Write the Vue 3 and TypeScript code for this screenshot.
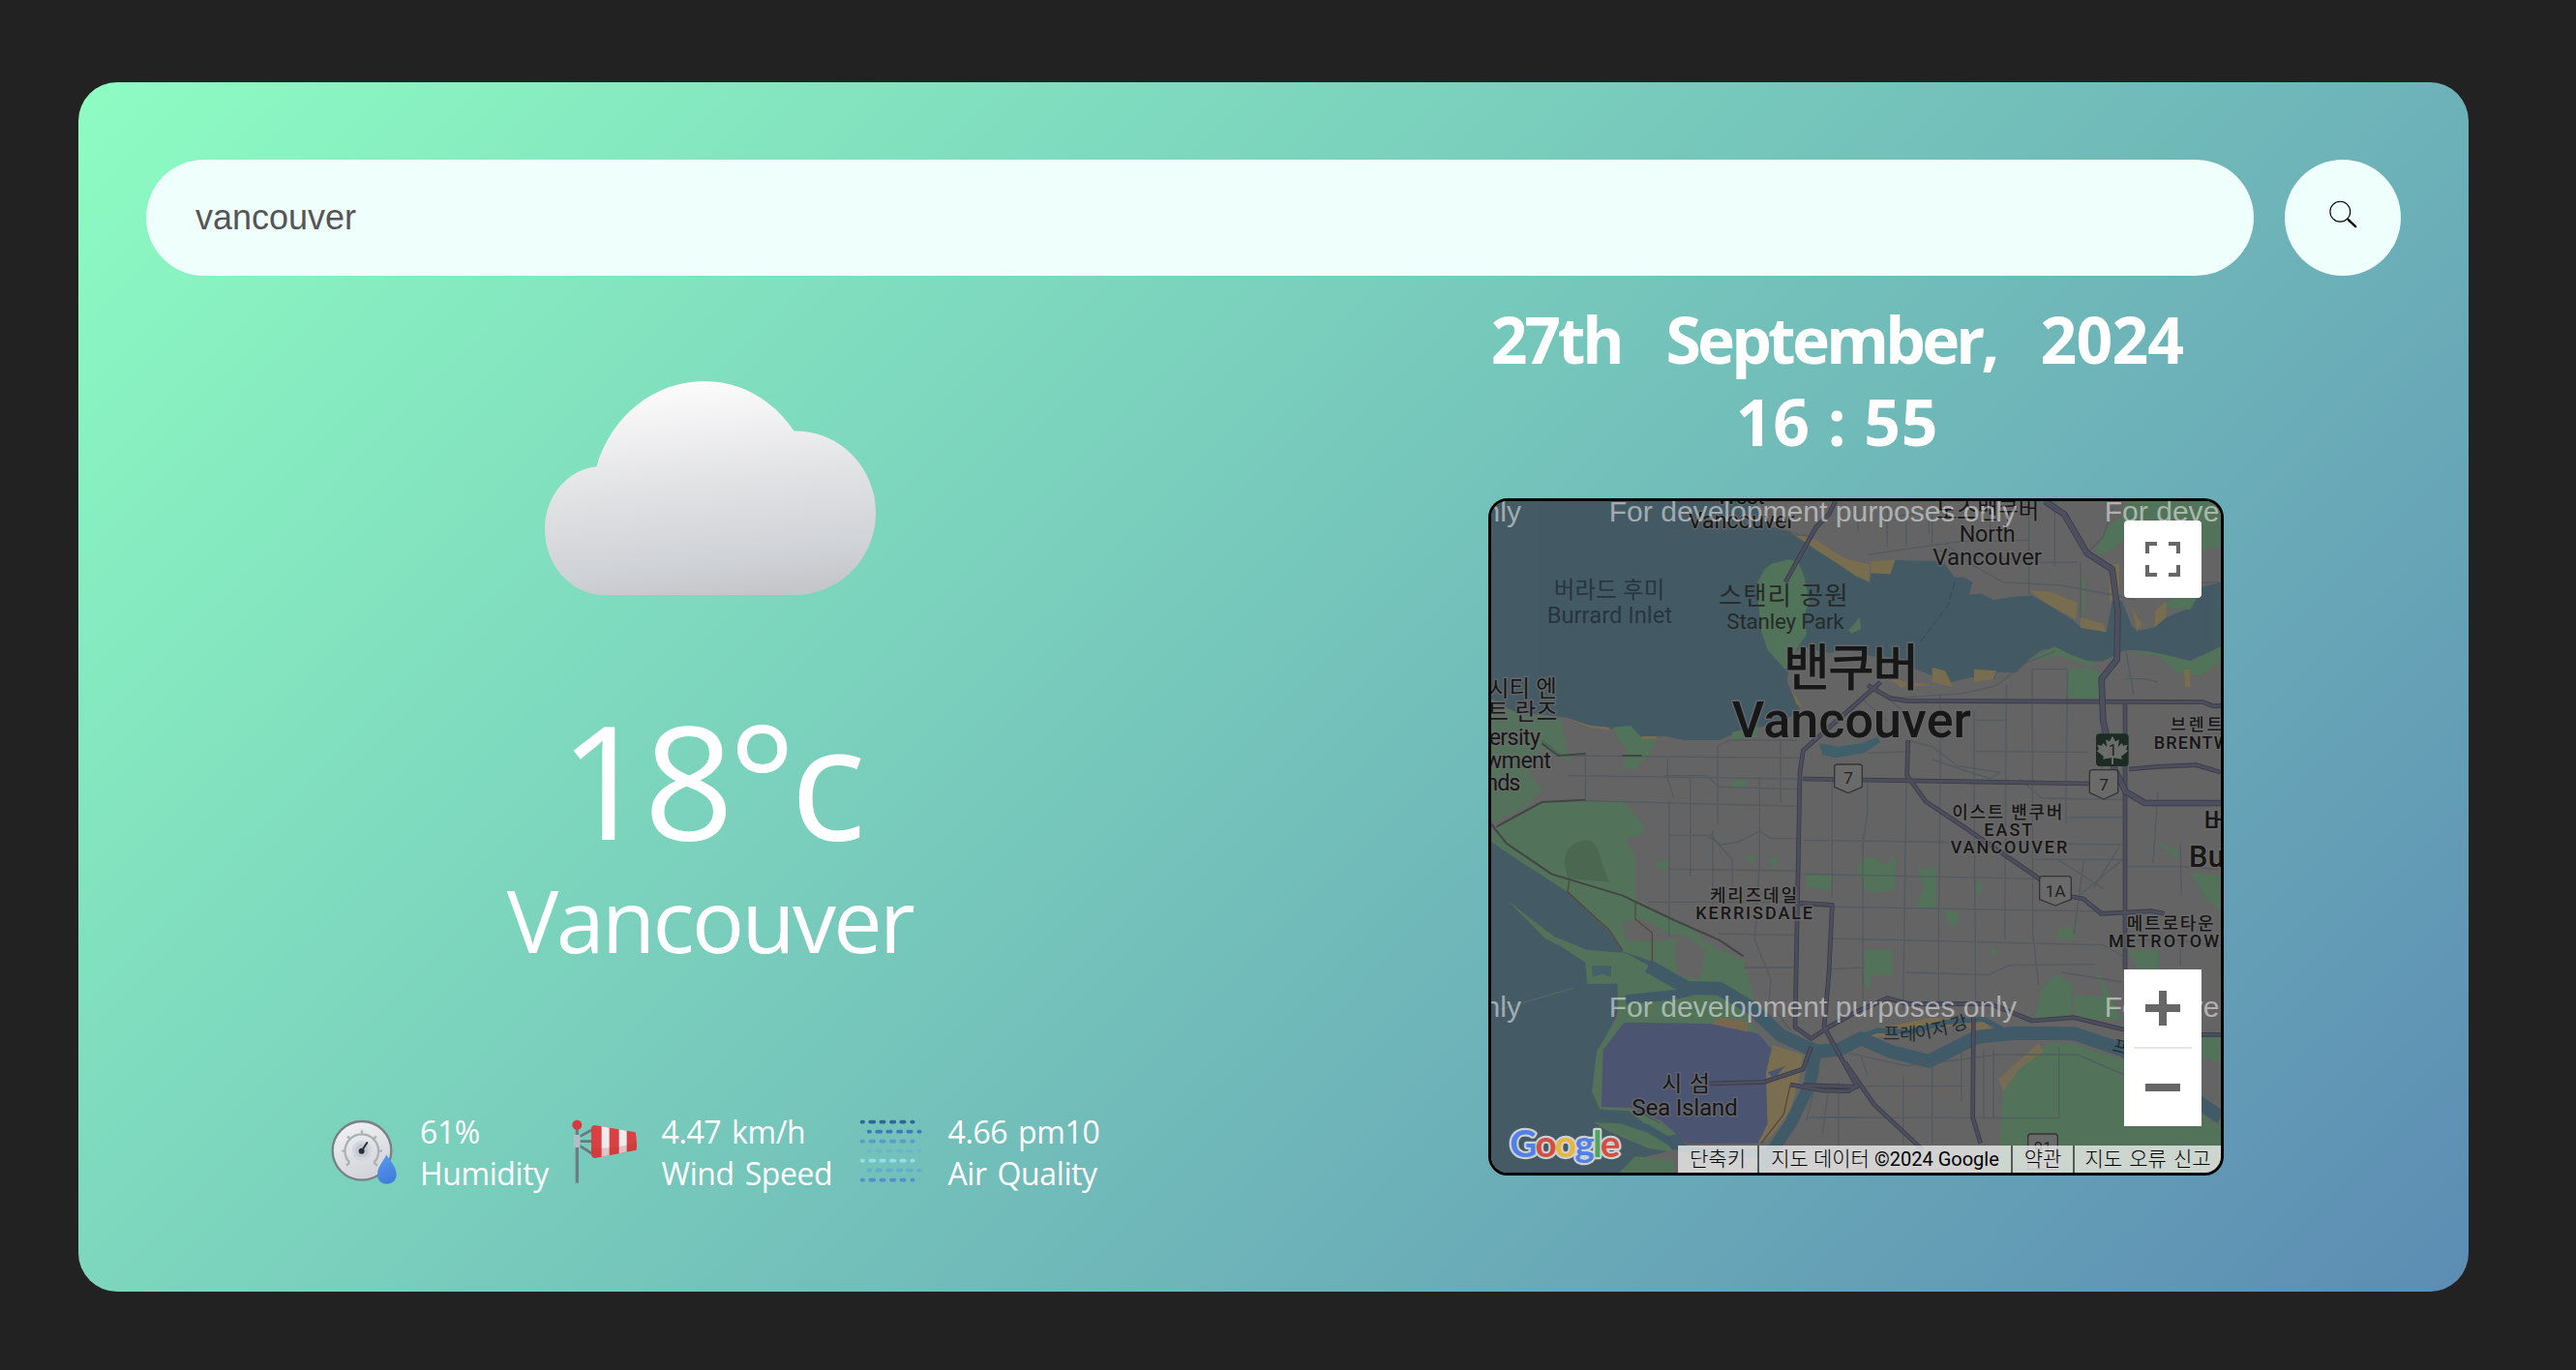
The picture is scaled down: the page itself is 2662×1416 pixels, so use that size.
<script setup lang="ts">
import { ref } from 'vue'

interface Label {
  t: string
  x: number
  y: number
  s: number
  w: number
  c?: string
  b?: number
  a?: 'start' | 'middle' | 'end'
}

const query = ref('vancouver')
const city = ref('Vancouver')
const temperature = ref(18)

// Place names. x / y are map units, s the font size, w the drawn width.
const labels: Label[] = [
  { t: 'West', x: 806, y: 47, s: 70, w: 150 },
  { t: 'Vancouver', x: 808, y: 122, s: 70, w: 330 },
  { t: '노스밴쿠버', x: 1572, y: 92, s: 70, w: 320 },
  { t: 'North', x: 1571, y: 166, s: 70, w: 174 },
  { t: 'Vancouver', x: 1571, y: 238, s: 72, w: 338 },
  { t: '버라드 후미', x: 399, y: 338, s: 70, w: 344, c: '#26353f' },
  { t: 'Burrard Inlet', x: 400, y: 418, s: 71, w: 388, c: '#26353f' },
  { t: '스탠리 공원', x: 938, y: 360, s: 80, w: 402, c: '#262b28' },
  { t: 'Stanley Park', x: 945, y: 434, s: 67, w: 364, c: '#262b28' },
  { t: '밴쿠버', x: 1149, y: 613, s: 156, w: 420, b: 500 },
  { t: 'Vancouver', x: 1150, y: 770, s: 156, w: 742, b: 500 },
  { t: '시티 엔', x: 236, y: 646, s: 70, w: 212, a: 'end' },
  { t: '트 란즈', x: 238, y: 718, s: 70, w: 216, a: 'end' },
  { t: 'ersity', x: 186, y: 794, s: 70, w: 160, a: 'end' },
  { t: 'wment', x: 219, y: 866, s: 70, w: 205, a: 'end' },
  { t: 'nds', x: 124, y: 937, s: 70, w: 108, a: 'end' },
  { t: '브렌트', x: 2219, y: 751, s: 52, w: 160, b: 500 },
  { t: 'BRENTW', x: 2204, y: 807, s: 54, w: 234, b: 500 },
  { t: '이스트 밴쿠버', x: 1633, y: 1023, s: 54, w: 342, b: 500 },
  { t: 'EAST', x: 1636, y: 1077, s: 54, w: 150, b: 500 },
  { t: 'VANCOUVER', x: 1638, y: 1131, s: 54, w: 362, b: 500 },
  { t: '케리즈데일', x: 846, y: 1280, s: 54, w: 270, b: 500 },
  { t: 'KERRISDALE', x: 848, y: 1335, s: 54, w: 362, b: 500 },
  { t: '메트로타운', x: 2138, y: 1368, s: 54, w: 270, b: 500 },
  { t: 'METROTOW', x: 2118, y: 1422, s: 54, w: 342, b: 500 },
  { t: '버', x: 2242, y: 1064, s: 84, w: 78, b: 500, a: 'start' },
  { t: 'Bur', x: 2268, y: 1174, s: 92, w: 144, b: 500 },
  { t: '시 섬', x: 636, y: 1870, s: 69, w: 150 },
  { t: 'Sea Island', x: 633, y: 1944, s: 73, w: 328 },
]

// Neighbourhood street grid.
const streets = [
  'M325 820V962', 'M580 835V900L600 960', 'M585 970V1390', 'M650 895V1200', 'M735 1040V800L770 780H980',
  'M865 895V1160L850 1400', 'M930 780V975', 'M1090 910V1270', 'M720 1060V1340', 'M190 780L250 828L1000 835',
  'M270 890L980 900', 'M320 968L985 985', 'M570 890H700L740 925L985 932', 'M585 1075H700L745 1105L800 1095L865 1062L900 1085H985',
  'M585 1180L985 1185', 'M520 1282H985', 'M735 1380L985 1385', 'M815 1485H985', 'M710 1070L780 1150V1270',
  'M850 1400L900 1520L895 1590L960 1680', 'M1185 1075V1600', 'M1185 1110L1200 1000L1200 900', 'M1320 905L1310 1620', 'M1425 640V890L1420 1400V1600',
  'M1530 690V1000L1535 1600', 'M1630 610L1625 1400', 'M1710 560H1818', 'M1710 560L1712 1380L1730 1540', 'M1820 560L1815 900V1040',
  'M1870 1150L1840 1380', 'M1925 680V910', 'M2170 1100L2172 1260', 'M2100 940L2085 1160', 'M1000 1090L1995 1104',
  'M1000 1195L1720 1210', 'M990 1295L1990 1312', 'M1090 1395L1930 1415L2000 1455', 'M1085 1490L1185 1485', 'M1320 1500L1575 1508L1640 1478L1900 1475',
  'M1200 820L1330 815M1530 718H1630M1530 815L1880 817', 'M1320 780L1400 800L1480 860L1610 880L1580 900L1400 840', 'M1670 900L1740 960L1990 965', 'M1820 1020H1990M1720 1150H1990L1860 1260',
  'M1980 1110L1900 1240M1790 1150L1930 1240M2000 1172H2170L2290 1180', 'M1200 205L1300 190L1480 165L1700 160', 'M1270 90L1400 70V190L1550 210L1750 230L1850 228', 'M1170 130V60M1260 180V60M1320 180V60M1390 60V140',
  'M1440 170L1530 240L1620 290L1800 300L1960 330L2030 345', 'M1700 40V330M1780 40V240M1860 230V400M1580 60V170', 'M1880 200L1930 150L1960 60M2000 300L2290 290', 'M1280 650L1500 635L1600 610L1690 540L1780 505',
  'M2000 500L2025 640M2000 590H2060L2100 600', 'M1180 1760L1200 1820M1140 1750L1320 1790L1490 1770L1600 1755H1850L2000 1820', 'M1400 1790V2030M1310 1820V2030M1560 1740V1950M1590 1740V1950M1490 1740V1900', 'M1190 1853H1500M1050 1860H1120M1050 1950L1795 1952M1793 1730V1950',
  'M1050 1800L1010 1960M1110 1840V2040M1080 1850L1060 2000M1020 1950H1170', 'M1180 650L1260 720M1230 620L1320 700M1150 690L1240 600', 'M590 130L1010 145', 'M1800 1500L1990 1530M2000 1400H2170L2290 1420M2170 1480V1400',
]

// Arterial roads and highways.
const arterials = [
  'M1100 39L1080 80L1040 120L945 290', 'M1240 600L1000 812L990 880L975 1670L1025 1705L1075 1672L1170 1620L1262 1580L1330 1598H1580L1710 1650L1840 1640L1995 1678',
  'M1000 900L1890 915', 'M1200 610L1270 650L1320 658L2240 662L2270 674H2295', 'M1998 670V1490', 'M1325 780L1322 890L1380 970L1500 1050L1740 1215',
  'M1832 1265L1868 1272L1925 1318L2080 1310L2120 1318', 'M2010 870L2100 862L2220 857L2295 880', 'M990 1285L1090 1291L1080 1500L1065 1670L1168 1855L1000 1850',
  'M1130 1780L1220 1910L1370 2050', 'M710 1845L880 1840L1000 1800L1025 1730', 'M960 1848L1060 1866L1140 1868L1170 1850', 'M1528 1640L1526 1950L1550 2030', 'M2235 1693H2295',
]

const airRows = [
  { y: 87, shift: 0, c: '#2f6795' },
  { y: 117, shift: 21, c: '#4078bd' },
  { y: 147, shift: 0, c: '#5b9bc8' },
  { y: 177, shift: 21, c: '#6cb5ce' },
  { y: 207, shift: 0, c: '#8fe2e8' },
  { y: 237, shift: 21, c: '#61acd0' },
  { y: 267, shift: 0, c: '#528fcb' },
]
const airDots = [
  { x: 452, w: 15 }, { x: 482, w: 23 }, { x: 514, w: 21 }, { x: 546, w: 21 }, { x: 577, w: 21 }, { x: 607, w: 15 },
]

const leaf =
  'M0-44L9-27L21-33L17-10L29-22L33-14L47-17L42-3L48 3L27 20L30 28L3 24V44H-3V24L-30 28L-27 20L-48 3L-42-3L-47-17L-33-14L-29-22L-17-10L-21-33L-9-27Z'
</script>

<template>
  <main class="page">
    <section class="card">
      <form class="search" @submit.prevent>
        <input v-model="query" class="search-input" type="text" spellcheck="false" />
        <button class="search-button" type="button" aria-label="Search">
          <svg width="40" height="40" viewBox="0 0 40 40">
            <circle cx="17.3" cy="13.7" r="10.4" fill="none" stroke="#000" stroke-width="1.1" />
            <path d="M24.6 21L27 23.4" stroke="#000" stroke-width="1.6" />
            <path d="M26.2 22.6L33.2 29.2" stroke="#000" stroke-width="2.4" stroke-linecap="round" />
          </svg>
        </button>
      </form>

      <div class="body">
        <div class="weather">
          <svg class="cloud" viewBox="190 80 1025 524" preserveAspectRatio="none">
            <defs>
              <linearGradient id="cloudFill" x1="0.42" y1="0" x2="0.58" y2="1">
                <stop offset="0" stop-color="#fcfcfc" />
                <stop offset="0.5" stop-color="#e0e1e3" />
                <stop offset="0.82" stop-color="#d0d3d7" />
                <stop offset="1" stop-color="#c5c6ca" />
              </linearGradient>
            </defs>
            <path
              fill="url(#cloudFill)"
              d="M190 442C190 362 260 296 350 289C395 168 525 80 685 80C798 80 897 126 962 202C1102 200 1215 290 1215 403C1215 514 1103 604 965 604H375C270 604 190 530 190 442Z"
            />
          </svg>
          <h1 class="temp">{{ temperature }}°c</h1>
          <h2 class="city">{{ city }}</h2>

          <div class="stats">
            <div class="stat humidity">
              <svg class="stat-icon" viewBox="30 70 216 216">
                <defs>
                  <linearGradient id="dialFill" x1="0" y1="0" x2="0.4" y2="1">
                    <stop offset="0" stop-color="#f4f4f6" />
                    <stop offset="1" stop-color="#d3d5da" />
                  </linearGradient>
                  <linearGradient id="dropFill" x1="0" y1="0" x2="0.3" y2="1">
                    <stop offset="0" stop-color="#5a9df0" />
                    <stop offset="1" stop-color="#427ddc" />
                  </linearGradient>
                </defs>
                <circle cx="132" cy="176" r="91" fill="url(#dialFill)" stroke="#7b8085" stroke-width="7" />
                <circle cx="132" cy="176" r="31" fill="#d3d6dd" />
                <circle cx="132" cy="176" r="21" fill="#c3c8d1" />
                <path
                  d="M94 213A52 52 0 1 1 169 213M94 213L84 222M169 213L179 222M80 177H70M184 177H195M95 139L87 131M169 139L177 131M132 125V113"
                  fill="none"
                  stroke="#abb1b4"
                  stroke-width="7"
                />
                <path d="M132 176L148 151" stroke="#25303a" stroke-width="6" stroke-linecap="round" />
                <circle cx="131" cy="177" r="9" fill="#25303a" />
                <path d="M208 188C218 208 239 225 239 250C239 268 226 279 209 279C192 279 180 268 180 250C180 225 200 208 208 188Z" fill="url(#dropFill)" />
              </svg>
              <div class="stat-text">
                <p>61%</p>
                <p>Humidity</p>
              </div>
            </div>
            <div class="stat wind">
              <svg class="stat-icon" viewBox="775 70 216 216">
                <defs>
                  <clipPath id="sock">
                    <path d="M841 105Q843 97 852 97L978 119Q984 147 981 174L852 199Q843 198 841 190Z" />
                  </clipPath>
                </defs>
                <path d="M797 100V276" stroke="#6f7c83" stroke-width="10" />
                <path d="M801 134L842 112M801 147H842M801 158L842 184" stroke="#677a83" stroke-width="8" fill="none" />
                <rect x="787" y="127" width="20" height="39" rx="3" fill="#aebfc6" />
                <circle cx="797" cy="96" r="15" fill="#d9383d" />
                <g clip-path="url(#sock)">
                  <path d="M841 90H985V205H841Z" fill="#d94043" />
                  <path d="M873 90H897V205H873ZM927 90H951V205H927Z" fill="#ececee" />
                  <path d="M841 168Q910 172 985 150V205H841Z" fill="#b92c34" opacity="0.22" />
                </g>
              </svg>
              <div class="stat-text">
                <p>4.47 km/h</p>
                <p>Wind Speed</p>
              </div>
            </div>
            <div class="stat air">
              <svg class="stat-icon" viewBox="433 70 216 216">
                <g v-for="row in airRows" :key="row.y" :fill="row.c">
                  <rect
                    v-for="dot in airDots"
                    :key="dot.x"
                    :x="dot.x + row.shift - dot.w / 2"
                    :y="row.y - 5.5"
                    :width="dot.w"
                    height="11"
                    rx="5"
                  />
                </g>
              </svg>
              <div class="stat-text">
                <p>4.66 pm10</p>
                <p>Air Quality</p>
              </div>
            </div>
          </div>
        </div>

        <div class="place">
          <div class="date">
            <span class="day">27th</span>
            <span class="month">September,</span>
            <span class="year">2024</span>
          </div>
          <div class="time">16 : 55</div>

          <div class="map">
            <svg class="map-canvas" viewBox="33 39 2262 2082">
              <rect x="33" y="39" width="2262" height="2082" fill="#656464" />

              <!-- English Bay, Burrard Inlet and the strait -->
              <g fill="#445a65">
                <path
                  d="M33 39H850L900 118L980 138L1040 180L1110 225L1170 275L1205 290L1210 262L1270 265L1285 222L1415 225L1440 235L1470 275L1500 275L1525 290L1515 330L1550 325L1590 345L1650 335L1710 332L1760 360L1840 410L1860 430L1940 445L1960 340L1990 350L2020 430L2045 440L2090 430L2125 400L2200 370L2220 310L2295 290V490L2200 535L2140 520L2070 505L2000 500L1930 535L1880 535L1820 515L1780 495L1740 500L1700 530L1660 570L1600 570L1595 590L1520 585L1460 600L1400 580L1350 560L1290 540L1140 500L1080 510L1000 490L960 520L950 600L975 650L992 690L930 722L860 742L800 755L740 780H630L570 768L500 772L470 745L390 745L340 735L250 708L100 690L33 650Z"
                />
                <path d="M33 1095L130 1160L270 1250L400 1375L440 1435L530 1465L640 1530L650 1555L440 1570L420 1640L365 1740L350 1870L370 1920L500 1930L620 2010L640 2040L480 2080L430 2121H33Z" />
                <path d="M1050 790L1110 800L1180 790L1230 770L1240 785L1190 820L1100 835L1060 825Z" fill="#3f5f6b" />
              </g>

              <!-- Parks and woodland -->
              <g fill="#52735a">
                <path d="M33 665L100 690L245 710L278 850L190 805L150 885L190 930L145 985L33 1040Z" opacity="0.9" />
                <path d="M50 1050L190 972L440 970L505 1040L505 1070L445 1090L480 1140V1280L590 1335L740 1430L815 1460L850 1590L740 1535L620 1530L530 1465L440 1435L400 1375L270 1250L130 1160L33 1095Z" />
                <path d="M410 740L465 735L500 772L545 770L525 820L480 870L440 865L455 810L430 780Z" />
                <path d="M905 232L955 220L985 226L1005 280L1020 350L1000 400L1012 450L985 490L945 562L890 500L870 440L855 300L880 250Z" />
                <path d="M1140 440L1175 400L1180 435L1150 450Z" />
                <path d="M780 755L860 738V770L780 780Z" />
                <path d="M1818 562L1880 555L1920 570L1930 650H1818Z" />
                <path d="M1990 500L2070 505L2140 520L2200 535L2295 490V540L2230 580L2160 570L2100 520Z" />
                <path d="M1780 490L1830 515L1900 540L1900 555L1800 520L1700 530Z" />
                <path d="M2100 370L2150 340L2220 340L2200 375Z" />
                <path d="M1900 210L1950 110L2000 80L1990 39H2295V180L2220 190L2200 110L2000 150L1960 190Z" />
                <path d="M1865 280H1873V400H1865Z" />
                <path d="M1170 1190Q1172 1145 1210 1142Q1240 1150 1252 1170L1285 1135V1245L1220 1255L1190 1240Q1185 1215 1170 1190Z" />
                <path d="M1355 1178H1412V1300H1355L1372 1240Z" />
                <path d="M1190 1430H1276V1506L1215 1510L1200 1560L1190 1520Z" />
                <path d="M1440 1310H1482V1352H1450ZM1790 1370L1830 1355L1845 1398H1790ZM1535 1220H1555V1260H1540ZM1575 1415L1600 1430L1590 1455Z" />
                <path d="M1010 1192L1090 1200L1085 1245L1010 1235ZM540 1160L580 1150V1180H550ZM820 1145L850 1130V1165ZM890 1145L920 1150L915 1180ZM780 905H820L830 925H780Z" />
                <path d="M1720 1640L1740 1550L1785 1505L1835 1540L1830 1640ZM1840 1570L1930 1575L1905 1480L1945 1560L1990 1650L1840 1640Z" />
                <path d="M1605 2121L1620 1870L1670 1790L1760 1720H1830L1990 1770L2295 1980V2121Z" />
                <path d="M2000 1430H2100V1490L2050 1500ZM2200 1190L2295 1200V1310L2250 1270ZM2090 1090L2170 1130L2160 1150ZM2235 1695H2295V1780L2235 1760Z" />
              </g>
              <path d="M260 1160Q262 1092 335 1090Q365 1100 375 1160L400 1220L270 1208Z" fill="#4b6750" />
              <path d="M440 1345L500 1335L600 1385L625 1350L700 1390L690 1480L680 1520L610 1510L600 1440L610 1395L540 1405L450 1400Z" fill="#656464" />
              <path d="M560 1350L640 1350L690 1400L700 1430L640 1390L560 1370Z" fill="#52735a" />

              <!-- Sea Island -->
              <g>
                <path
                  d="M80 1273L150 1330L230 1390L330 1430L450 1440L560 1500L655 1555L445 1572L720 1560L800 1600L860 1690L900 1730L380 1740L372 1915L470 1925L620 2000L560 2010L460 1930L370 1925L345 1870L360 1745L425 1640L425 1535L330 1535L325 1470L250 1420L200 1395Z"
                  fill="#52735a"
                />
                <path d="M345 1480H405V1515L375 1505L348 1515Z" fill="#44606b" />
                <path d="M445 1655L740 1660L860 1690L905 1740L885 1810L890 1970L860 2030L640 2032L560 1960L470 1920L375 1917L380 1740Z" fill="#4b5572" />
                <path d="M740 1640L825 1650L830 1685L715 1660Z" fill="#77674f" />
                <path d="M905 1725L1000 1755L990 1820L960 1930L900 2010L860 2030L890 1970L885 1810Z" fill="#7a6e50" />
                <path d="M890 1810L945 1790L910 1830Z" fill="#4b5572" />
                <path d="M350 1965L470 1970L560 2010L600 2058L520 2045L400 1995ZM430 2121L480 2070L600 2085V2121Z" fill="#52735a" />
              </g>

              <!-- Industrial shoreline -->
              <g fill="#7a6d50">
                <path d="M960 135L1040 160L1110 205L1170 235V275L1110 235L1040 190ZM1140 220L1205 235V290L1170 270ZM1210 225L1285 222L1270 265L1210 262Z" />
                <path d="M1700 315L1770 320L1850 355L1845 405L1760 360ZM1860 400L1930 420L1940 445L1860 432ZM1980 230V345L1950 350V240ZM2020 370L2050 420L2035 445ZM2090 380L2125 350V400L2090 430Z" />
                <path d="M1400 555L1440 565L1465 615L1400 600ZM1530 560L1600 565L1590 590L1530 600ZM2180 560H2200V615H2185Z" />
                <path d="M250 705L340 735L400 740V748L340 742ZM500 768H545V776H500ZM960 620L1000 680L980 670ZM1270 590L1400 610L1300 615Z" />
                <path d="M1150 1700L1250 1670L1400 1640L1560 1650L1590 1680L1550 1700L1500 1660L1250 1700Z" />
                <path d="M1605 1830L1650 1790L1730 1720L1745 1745L1670 1800L1620 1870Z" opacity="0.8" />
              </g>

              <!-- Fraser River -->
              <g fill="none" stroke="#405b67" stroke-linejoin="round">
                <path d="M520 1480L640 1548L740 1550L840 1610L930 1695L1040 1745L1110 1740L1180 1705L1270 1745L1390 1775L1540 1700L1660 1688L1840 1690L1990 1740L2295 1950" stroke-width="42" />
                <path d="M450 1585L600 1570L700 1545" stroke-width="30" />
                <path d="M1040 1740L1020 1850L960 1970L900 2060L870 2121" stroke-width="38" />
                <path d="M1150 1710L1230 1680L1330 1685L1440 1655L1560 1645L1640 1690" stroke-width="16" />
                <path d="M370 1935L520 1985L620 2045L700 2060L880 2060" stroke-width="24" />
              </g>

              <g fill="none" stroke="#505960" stroke-width="4" opacity="0.8">
                <path v-for="d in streets" :key="d" :d="d" />
              </g>
              <g fill="none" stroke="#414644" stroke-linejoin="round">
                <path d="M33 1040L80 1100L220 1195L440 1262L600 1338L740 1400L815 1450" stroke-width="6" />
                <path d="M50 1048L190 972L325 965M190 790L240 828L325 822M440 828H500" stroke-width="6" />
                <path d="M275 1215L270 1250L400 1370L440 1432M480 1280V1335L532 1378V1465M960 1850L940 1940L870 2030" stroke-width="4" stroke="#54473f" />
                <path d="M1470 290L1450 360L1360 480" stroke="#364951" stroke-width="3" stroke-dasharray="24 8" />
                <path d="M60 1615L290 1548" stroke="#52705e" stroke-width="3" />
              </g>
              <g fill="none" stroke-linejoin="round">
                <path v-for="d in arterials" :key="'o' + d" :d="d" stroke="#383b47" stroke-width="14" />
                <path v-for="d in arterials" :key="'i' + d" :d="d" stroke="#4c4e5e" stroke-width="9" />
                <path d="M1750 39L1810 80L1880 200L1958 250L1975 380L1973 530L1925 590L1930 720L1965 870L2000 940L2060 975H2295" stroke="#383b47" stroke-width="20" />
                <path d="M1750 39L1810 80L1880 200L1958 250L1975 380L1973 530L1925 590L1930 720L1965 870L2000 940L2060 975H2295" stroke="#4d4f60" stroke-width="15" />
              </g>

              <!-- Route shields -->
              <g class="shields" stroke-linejoin="round" text-anchor="middle">
                <path d="M1106 855H1174Q1183 855 1183 864V925L1140 944L1097 925V864Q1097 855 1106 855Z" />
                <text x="1140" y="916" font-size="52">7</text>
                <path d="M1897 872H1967Q1976 872 1976 881V943L1932 963L1888 943V881Q1888 872 1897 872Z" />
                <text x="1932" y="935" font-size="52">7</text>
                <path d="M1742 1202H1822Q1831 1202 1831 1211V1274L1782 1293L1733 1274V1211Q1733 1202 1742 1202Z" />
                <text x="1782" y="1266" font-size="52">1A</text>
                <path d="M1706 2001H1780Q1789 2001 1789 2010V2110H1697V2010Q1697 2001 1706 2001Z" />
                <text x="1743" y="2060" font-size="50">91</text>
              </g>
              <rect x="1908" y="760" width="101" height="101" rx="11" fill="#1d2b25" />
              <path :d="leaf" transform="translate(1959 811)" fill="#6b6d6b" />
              <text x="1960" y="829" font-size="48" text-anchor="middle" fill="#222" class="map-font">1</text>

              <!-- Place names -->
              <g class="map-font">
                <text
                  v-for="(l, i) in labels"
                  :key="i"
                  :x="l.x"
                  :y="l.y"
                  :font-size="l.s"
                  :font-weight="l.b ?? 400"
                  :text-anchor="l.a ?? 'middle'"
                  :textLength="l.w"
                  :fill="l.c ?? '#171717'"
                  :class="{ halo: !l.c }"
                  >{{ l.t }}</text
                >
                <path id="river" d="M1248 1710L1350 1710L1450 1690L1550 1657" fill="none" />
                <text font-size="56" fill="#1d2b33"><textPath href="#river">프레이저 강</textPath></text>
                <text x="1956" y="1744" font-size="54" fill="#1d2b33" transform="rotate(14 1956 1744)">프레이저 강</text>
              </g>

              <g class="watermark">
                <template v-for="y in [103, 1639]" :key="y">
                  <text v-for="x in [-1138, 398, 1934]" :key="x" :x="x" :y="y" textLength="1264">For development purposes only</text>
                </template>
              </g>

              <!-- Brand mark -->
              <g class="brand">
                <text x="91" y="2074" textLength="342" class="brand-outline">Google</text>
                <text x="91" y="2074" textLength="342"
                  ><tspan fill="#5280e6">G</tspan><tspan fill="#d64d41">o</tspan><tspan fill="#e9b63c">o</tspan
                  ><tspan fill="#5280e6">g</tspan><tspan fill="#4ba65c">l</tspan><tspan fill="#d64d41">e</tspan></text
                >
              </g>
            </svg>

            <button class="fullscreen" type="button" aria-label="Fullscreen">
              <svg width="36" height="36" viewBox="0 0 18 18" fill="#666">
                <path d="M0 0v6h2V2h4V0H0zm16 0h-4v2h4v4h2V0h-2zm0 16h-4v2h6v-6h-2v4zM2 12H0v6h6v-2H2v-4z" />
              </svg>
            </button>
            <div class="zoom">
              <button type="button" aria-label="Zoom in">
                <svg width="36" height="36" viewBox="0 0 18 18" fill="#666"><path d="M18 7h-7V0H7v7H0v4h7v7h4v-7h7z" /></svg>
              </button>
              <span class="divider"></span>
              <button type="button" aria-label="Zoom out">
                <svg width="36" height="36" viewBox="0 0 18 18" fill="#666"><path d="M0 7h18v4H0z" /></svg>
              </button>
            </div>
            <div class="legal">
              <span class="l1">단축키</span>
              <span class="l2">지도 데이터 <b>©2024 Google</b></span>
              <span class="l3">약관</span>
              <span class="l4">지도 오류 신고</span>
            </div>
          </div>
        </div>
      </div>
    </section>
  </main>
</template>

<style>
body {
  margin: 0;
  background: #222;
}
</style>

<style scoped>
.page {
  box-sizing: border-box;
  width: 2662px;
  height: 1416px;
  padding: 85px 0 0 81px;
  background: #222;
  font-family: 'Open Sans', 'Noto Sans', sans-serif;
  color: #fff;
  overflow: hidden;
}
.card {
  box-sizing: border-box;
  width: 2470px;
  height: 1250px;
  padding: 80px 70px 0;
  border-radius: 40px;
  background: linear-gradient(135deg, #8dfcc2, #5c8cb3);
}
.search {
  display: flex;
  gap: 32px;
}
.search-input {
  box-sizing: border-box;
  flex: 1;
  min-width: 0;
  height: 120px;
  padding: 0 51px;
  border: 0;
  outline: 0;
  border-radius: 60px;
  background: #effffc;
  color: #555;
  font: 36px 'Liberation Sans', Arial, sans-serif;
}
.search-button {
  display: flex;
  align-items: center;
  justify-content: center;
  width: 120px;
  height: 120px;
  padding: 0;
  border: 0;
  border-radius: 50%;
  background: #effffc;
}
.body {
  display: grid;
  grid-template-columns: 1fr 1fr;
}
.weather,
.place {
  display: flex;
  flex-direction: column;
  align-items: center;
}
.cloud {
  width: 342px;
  height: 221px;
  margin-top: 108.5px;
}
.temp {
  margin: 108.5px 0 0;
  font-size: 163px;
  line-height: 164px;
  font-weight: 400;
  letter-spacing: -5.8px;
}
.city {
  margin: 18px 0 0;
  font-size: 90px;
  line-height: 90px;
  font-weight: 400;
  letter-spacing: -2.7px;
}
.stats {
  display: flex;
  align-self: flex-start;
  margin: 152px 0 0 189px;
}
.stat {
  display: flex;
  align-items: center;
  gap: 22px;
}
.humidity {
  width: 248.5px;
}
.wind {
  width: 296px;
}
.wind .stat-text,
.air .stat-text {
  margin-left: 1px;
}
.stat-icon {
  width: 72px;
  height: 72px;
}
.stat-text p {
  position: relative;
  top: 1px;
  margin: 0;
  font-size: 32px;
  line-height: 43px;
  letter-spacing: -0.4px;
  word-spacing: 3px;
  white-space: nowrap;
}
.date {
  display: flex;
  gap: 46px;
  margin-top: 23px;
  font-size: 66px;
  line-height: 85px;
  font-weight: 700;
}
.day {
  letter-spacing: -3.2px;
}
.month {
  letter-spacing: -3.8px;
}
.year {
  letter-spacing: -0.8px;
}
.time {
  font-size: 66px;
  line-height: 85px;
  font-weight: 700;
  letter-spacing: 0.8px;
}
.map {
  position: relative;
  box-sizing: border-box;
  width: 760px;
  height: 700px;
  margin: 37px 0 0 39px;
  border: 3px solid #000;
  border-radius: 20px;
  overflow: hidden;
}
.map-canvas {
  display: block;
  width: 754px;
  height: 694px;
}
.map-font,
.shields text {
  font-family: Roboto, 'Noto Sans CJK KR', sans-serif;
}
.halo {
  paint-order: stroke;
  stroke: #6c6b6b;
  stroke-opacity: 0.75;
  stroke-width: 9px;
  stroke-linejoin: round;
}
.shields path {
  fill: #6b6a6a;
  stroke: #343434;
  stroke-width: 4px;
}
.shields text {
  fill: #222;
}
.watermark {
  font-family: 'Liberation Sans', Arial, sans-serif;
  font-size: 90px;
  fill: #fff;
  fill-opacity: 0.5;
}
.brand {
  font-family: Lato, sans-serif;
  font-size: 116px;
  font-weight: 700;
}
.brand-outline {
  fill: #ccd2d4;
  stroke: #ccd2d4;
  stroke-width: 13px;
  stroke-linejoin: round;
}
.fullscreen {
  position: absolute;
  top: 20px;
  right: 20px;
  display: flex;
  align-items: center;
  justify-content: center;
  width: 80px;
  height: 80px;
  padding: 0;
  border: 0;
  border-radius: 4px;
  background: #fff;
}
.zoom {
  position: absolute;
  right: 20px;
  bottom: 48px;
  display: flex;
  flex-direction: column;
  align-items: center;
  width: 80px;
  height: 162px;
  background: #fff;
}
.zoom button {
  display: flex;
  align-items: center;
  justify-content: center;
  width: 80px;
  height: 80px;
  padding: 0;
  border: 0;
  background: none;
}
.divider {
  width: 60px;
  height: 2px;
  background: #e6e6e6;
}
.legal {
  position: absolute;
  right: 0;
  bottom: 0;
  display: flex;
  height: 28px;
  font: 300 21px/28px Roboto, 'Noto Sans CJK KR', sans-serif;
  color: #000;
}
.legal span {
  box-sizing: border-box;
  text-align: center;
  white-space: nowrap;
  background: rgba(245, 245, 245, 0.76);
}
.legal span + span {
  border-left: 2px solid rgba(40, 50, 46, 0.75);
}
.legal b {
  font-size: 20px;
  font-weight: 400;
}
.l1 {
  width: 82px;
}
.l2 {
  width: 262px;
}
.l3 {
  width: 64px;
}
.l4 {
  width: 153px;
  word-spacing: 2px;
}
</style>
